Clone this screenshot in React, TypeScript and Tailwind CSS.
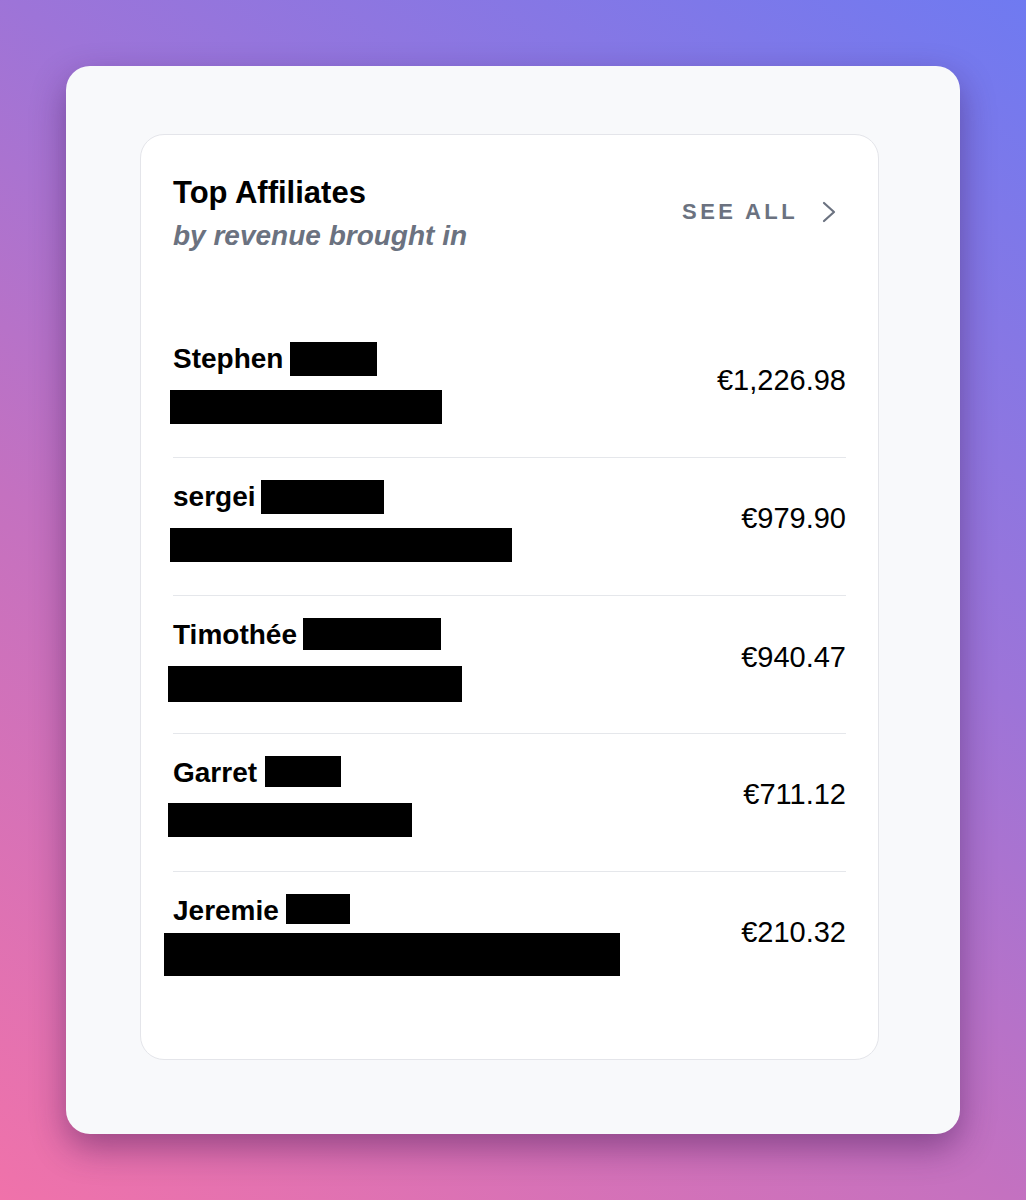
import React from "react";

interface Affiliate {
  id: string;
  name: string;
  amount: string;
  nameBox: string;
  gap: string;
  lineBox: string;
}

const affiliates: Affiliate[] = [
  {
    id: "1",
    name: "Stephen",
    amount: "€1,226.98",
    nameBox: "ml-[7px] w-[87px] h-[34px]",
    gap: "mt-[14px]",
    lineBox: "-ml-[3px] w-[272px] h-[34px]",
  },
  {
    id: "2",
    name: "sergei",
    amount: "€979.90",
    nameBox: "ml-[5px] w-[123px] h-[34px]",
    gap: "mt-[14px]",
    lineBox: "-ml-[3px] w-[342px] h-[34px]",
  },
  {
    id: "3",
    name: "Timothée",
    amount: "€940.47",
    nameBox: "ml-[6px] w-[138px] h-[32px]",
    gap: "mt-[14px]",
    lineBox: "-ml-[5px] w-[294px] h-[36px]",
  },
  {
    id: "4",
    name: "Garret",
    amount: "€711.12",
    nameBox: "ml-[8px] w-[76px] h-[31px]",
    gap: "mt-[13px]",
    lineBox: "-ml-[5px] w-[244px] h-[34px]",
  },
  {
    id: "5",
    name: "Jeremie",
    amount: "€210.32",
    nameBox: "ml-[7px] w-[64px] h-[30px]",
    gap: "mt-[5px]",
    lineBox: "-ml-[9px] w-[456px] h-[43px]",
  },
];

function ChevronRight() {
  return (
    <svg
      width="16"
      height="22"
      viewBox="0 0 16 22"
      fill="none"
      stroke="#6b7280"
      strokeWidth="2.2"
      strokeLinecap="round"
      strokeLinejoin="round"
    >
      <polyline points="3,2 13,11 3,20" />
    </svg>
  );
}

export default function App() {
  return (
    <div className="w-full h-[1200px] pt-[66px] bg-[linear-gradient(35deg,#f072aa_0%,#c471c0_37%,#9d74d8_63%,#6f7af1_100%)] font-['Liberation_Sans',Arial,sans-serif]">
      <div className="mx-auto w-[894px] rounded-[24px] bg-[#f8f9fb] pl-[74px] pr-[81px] pt-[68px] pb-[74px] shadow-[0_14px_34px_rgba(60,20,80,0.45)]">
        <div className="h-[926px] rounded-[24px] border border-[#e4e5ea] bg-white px-[32px] pt-[40px]">
          {/* header */}
          <div className="flex items-start justify-between">
            <div>
              <h2 className="text-[31px] leading-[36px] font-bold text-black">
                Top Affiliates
              </h2>
              <p className="mt-[8px] text-[28px] leading-[34px] font-bold italic text-[#6b7280]">
                by revenue brought in
              </p>
            </div>
            <button className="mt-[23px] flex items-center">
              <span className="text-[22px] leading-[28px] font-bold tracking-[3.4px] text-[#6b7280]">
                SEE ALL
              </span>
              <span className="ml-[23px] mr-[9px]">
                <ChevronRight />
              </span>
            </button>
          </div>

          {/* list */}
          <div className="mt-[66px]">
            {affiliates.map((a, index) => (
              <div
                key={a.id}
                className={
                  index === 0
                    ? "h-[138px] border-t border-transparent pt-[22px]"
                    : "h-[138px] border-t border-[#e5e7eb] pt-[22px]"
                }
              >
                <div className="flex items-center justify-between">
                  <div className="flex flex-col">
                    <div className="flex items-start">
                      <span className="text-[28px] leading-[34px] font-bold text-black">
                        {a.name}
                      </span>
                      <span className={`bg-black ${a.nameBox}`} />
                    </div>
                    <div className={`${a.gap} bg-black ${a.lineBox}`} />
                  </div>
                  <span className="-mt-[6px] text-[29px] leading-[32px] text-black">
                    {a.amount}
                  </span>
                </div>
              </div>
            ))}
          </div>
        </div>
      </div>
    </div>
  );
}
